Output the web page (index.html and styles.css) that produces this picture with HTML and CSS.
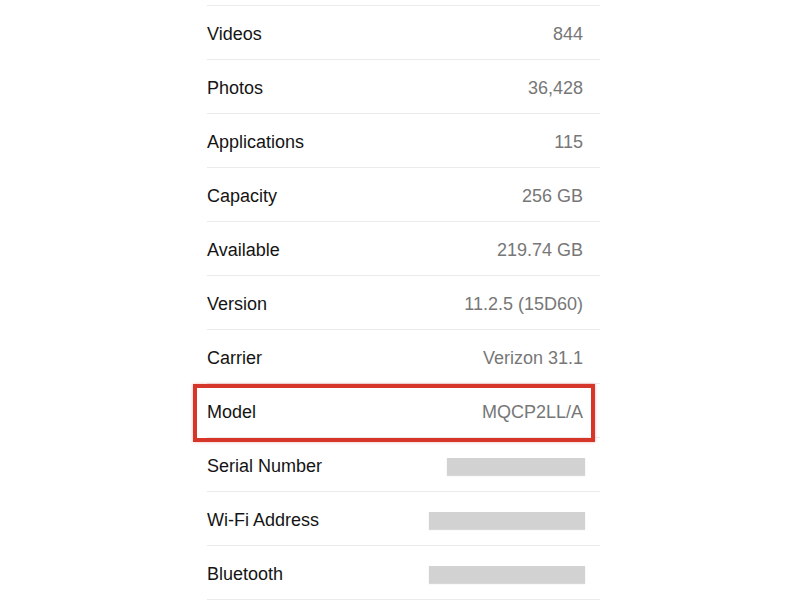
FILE: index.html
```html
<!DOCTYPE html>
<html lang="en">
<head>
<meta charset="utf-8">
<title>About</title>
<link rel="stylesheet" href="styles.css">
</head>
<body>
<ul class="list">
  <li class="row"><span class="label">Videos</span><span class="value">844</span></li>
  <li class="row"><span class="label">Photos</span><span class="value">36,428</span></li>
  <li class="row"><span class="label">Applications</span><span class="value">115</span></li>
  <li class="row"><span class="label">Capacity</span><span class="value">256 GB</span></li>
  <li class="row"><span class="label">Available</span><span class="value">219.74 GB</span></li>
  <li class="row"><span class="label">Version</span><span class="value">11.2.5 (15D60)</span></li>
  <li class="row"><span class="label">Carrier</span><span class="value">Verizon 31.1</span></li>
  <li class="row row-highlight"><span class="label">Model</span><span class="value">MQCP2LL/A</span><span class="highlight"></span></li>
  <li class="row"><span class="label">Serial Number</span><span class="redacted redacted-serial"></span></li>
  <li class="row"><span class="label">Wi-Fi Address</span><span class="redacted redacted-wide"></span></li>
  <li class="row"><span class="label">Bluetooth</span><span class="redacted redacted-wide"></span></li>
</ul>
</body>
</html>
```
FILE: styles.css
```css
html, body {
  margin: 0;
  padding: 0;
  background: #ffffff;
}

body {
  font-family: "Liberation Sans", Arial, sans-serif;
  overflow: hidden;
  height: 600px;
}

.list {
  list-style: none;
  margin: 0 0 0 207px;
  padding: 0;
  width: 393px;
  padding-top: 5px;
}

.list::before {
  content: "";
  display: block;
  height: 1px;
  background: #ebebeb;
}

.row {
  position: relative;
  display: flex;
  align-items: center;
  justify-content: space-between;
  box-sizing: border-box;
  height: 54px;
  padding-top: 4px;
  border-bottom: 1px solid #ebebeb;
  padding-right: 17px;
  font-size: 18px;
}

.label {
  color: #141414;
}

.value {
  color: #777777;
}

.highlight {
  position: absolute;
  left: -14px;
  top: 0;
  width: 402px;
  height: 58px;
  box-sizing: border-box;
  border: 4px solid #d6352a;
  box-shadow: 0 0 3px rgba(214, 53, 42, 0.35);
  pointer-events: none;
}

.redacted {
  display: block;
  height: 17px;
  margin-right: -2px;
  background: #d2d2d2;
  box-shadow: 0 1px 1px rgba(0, 0, 0, 0.15);
}

.redacted-serial {
  width: 138px;
}

.redacted-wide {
  width: 156px;
}
```
